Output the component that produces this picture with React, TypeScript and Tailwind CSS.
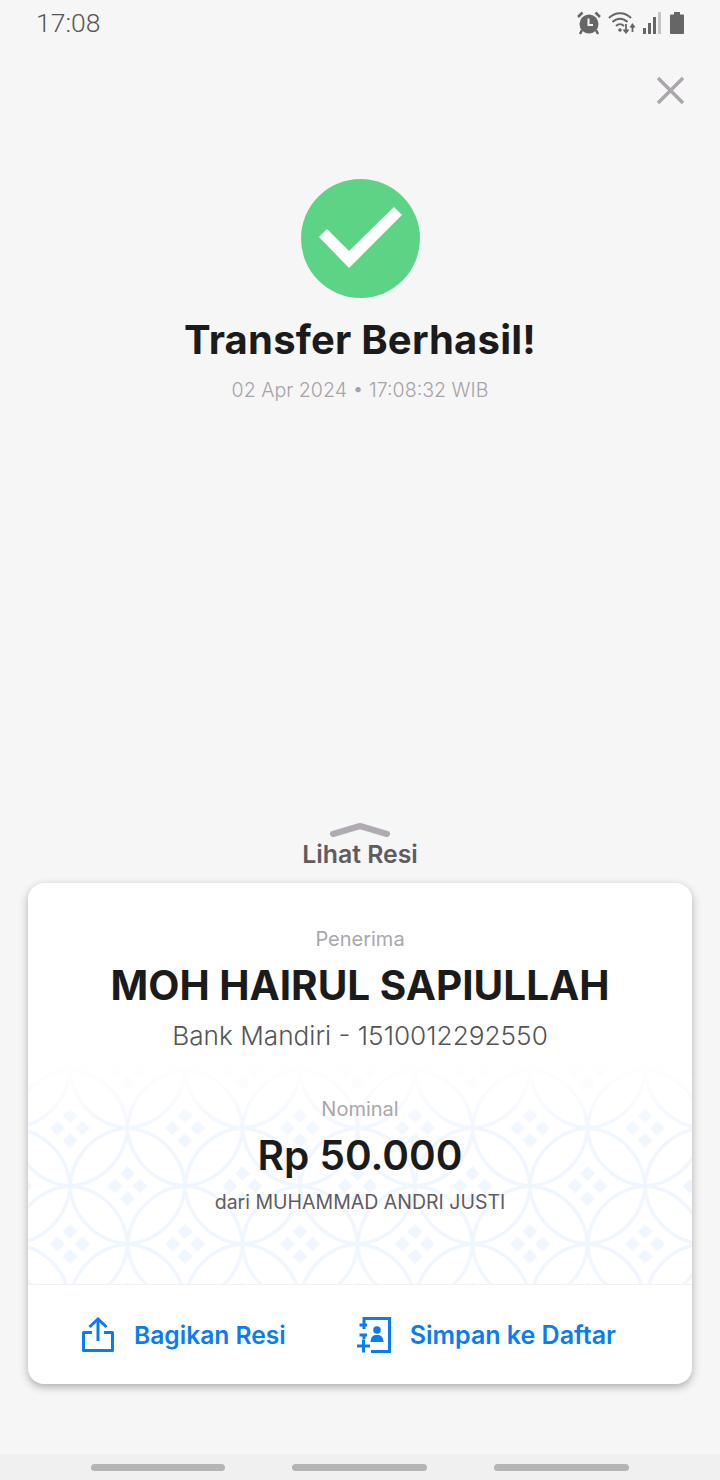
const font = "font-['Inter','Liberation_Sans',sans-serif]";

const AlarmIcon = () => (
  <svg width="24" height="24" viewBox="0 0 24 24" fill="#666">
    <circle cx="12" cy="13" r="9.5" />
    <path d="M5 19 L3 23 M19 19 L21 23" stroke="#666" strokeWidth="2.500" />
    <path d="M1 6 L5.5 1.5 M23 6 L18.5 1.5" stroke="#666" strokeWidth="2.500" />
    <path d="M11.5 7.500 V14 H16" fill="none" stroke="#f6f6f6" strokeWidth="2" />
  </svg>
);

const WifiIcon = () => (
  <svg width="28" height="24" viewBox="0 0 28 24" fill="none" stroke="#666">
    <path d="M1 7 C7 0.5 17 0.5 23 7" strokeWidth="2" />
    <path d="M4.5 11 C9 6.5 15 6.5 19.5 11" strokeWidth="2" />
    <path d="M8 15 C10.5 12.5 13.5 12.5 16 15" strokeWidth="2" />
    <circle cx="12" cy="19" r="1.8" fill="#666" stroke="none" />
    <path d="M18 13 V21 M15.5 18.5 L18 21.5 L20.5 18.5" strokeWidth="1.8" />
    <path d="M24.5 21 V14 M22.5 16.5 L24.5 13.5 L26.5 16.5" strokeWidth="1.8" />
  </svg>
);

const SignalIcon = () => (
  <svg width="18" height="22" viewBox="0 0 18 22">
    <rect x="0" y="16" width="3" height="6" fill="#666" />
    <rect x="5" y="11" width="3" height="11" fill="#666" />
    <rect x="10" y="5" width="3" height="17" fill="#666" />
    <rect x="15" y="0" width="3" height="22" fill="#c4c4c4" />
  </svg>
);

const BatteryIcon = () => (
  <svg width="14" height="22" viewBox="0 0 14 22" fill="#666">
    <rect x="4" y="0" width="6" height="3" />
    <rect x="0" y="2.5" width="14" height="19.5" rx="1" />
  </svg>
);

const ShareIcon = () => (
  <svg width="32" height="35" viewBox="0 0 32 35" fill="none" stroke="#0a7cf0" strokeWidth="3">
    <path d="M10 15.5 H1.5 V33.5 H30.5 V15.5 H22" strokeLinejoin="round" />
    <path d="M16 24 V2.5" />
    <path d="M7.5 10 L16 2 L24.5 10" />
  </svg>
);

const ContactIcon = () => (
  <svg width="34" height="36" viewBox="0 0 34 36" fill="none" stroke="#0a7cf0" strokeWidth="3">
    <path d="M7 4 V1.5 H32.5 V34.5 H14" />
    <path d="M2.5 8 H10 M7 8 V4 M7 12 V8 M2.5 18 H10 M7 18 V22" />
    <path d="M0 29 H13 M6.5 22.5 V35.5" />
    <circle cx="20" cy="13" r="3.8" fill="#0a7cf0" stroke="none" />
    <path d="M13.500 25 C14 19.500 16 18 20 18 C24 18 26 19.500 26.500 25 Z" fill="#0a7cf0" stroke="none" />
  </svg>
);

const BatikPattern = () => (
  <svg className="absolute inset-0 h-full w-full" aria-hidden="true">
    <defs>
      <pattern
        id="kawung"
        width="115"
        height="116"
        patternUnits="userSpaceOnUse"
        patternTransform="translate(-15.5 10)"
      >
        <g fill="none" stroke="#f0f6fe" strokeWidth="3.5">
          <path d="M57.5 0 A62 62 0 0 0 0 58 A62 62 0 0 0 57.5 0" />
          <path d="M57.5 0 A62 62 0 0 0 115 58 A62 62 0 0 0 57.5 0" />
          <path d="M0 58 A62 62 0 0 0 57.5 116 A62 62 0 0 0 0 58" />
          <path d="M115 58 A62 62 0 0 0 57.5 116 A62 62 0 0 0 115 58" />
        </g>
        <g fill="#f0f6fe">
          <path d="M57.5 38 l7.5 7.500 l-7.5 7.500 l-7.5 -7.500 Z M57.5 63 l7.5 7.500 l-7.5 7.500 l-7.5 -7.500 Z M45 50.500 l7.5 7.500 l-7.5 7.500 l-7.5 -7.500 Z M70 50.500 l7.5 7.500 l-7.5 7.500 l-7.5 -7.500 Z" />
          <path d="M0 5 l7.5 7.500 l-7.5 7.500 l-7.5 -7.500 Z M12.500 -7.500 l7.5 7.500 l-7.5 7.500 l-7.5 -7.500 Z M115 5 l7.5 7.500 l-7.5 7.500 l-7.5 -7.500 Z M102.500 -7.500 l7.5 7.500 l-7.5 7.500 l-7.5 -7.500 Z" />
          <path d="M0 96 l7.5 7.500 l-7.5 7.500 l-7.5 -7.500 Z M12.500 108.500 l7.5 7.500 l-7.5 7.500 l-7.5 -7.500 Z M115 96 l7.5 7.500 l-7.5 7.500 l-7.5 -7.500 Z M102.500 108.500 l7.5 7.500 l-7.5 7.500 l-7.5 -7.500 Z" />
        </g>
      </pattern>
    </defs>
    <rect width="100%" height="100%" fill="url(#kawung)" />
  </svg>
);

export default function App() {
  return (
    <div className={`flex h-[1480px] w-[720px] flex-col overflow-hidden bg-[#f6f6f6] ${font}`}>
      <div className="flex h-[46px] items-center justify-between pl-[36px] pr-[36px]">
        <span className="font-['Roboto',sans-serif] text-[26.5px] font-light text-[#555]">17:08</span>
        <div className="flex items-center gap-[7px]">
          <AlarmIcon />
          <WifiIcon />
          <SignalIcon />
          <div className="ml-[2px]">
            <BatteryIcon />
          </div>
        </div>
      </div>

      <div className="flex justify-end pr-[36px] pt-[31px]">
        <svg width="27" height="27" viewBox="0 0 27 27" stroke="#aaa6ac" strokeWidth="3.500">
          <path d="M1 1 L26 26 M26 1 L1 26" />
        </svg>
      </div>

      <div className="mt-[75px] flex flex-col items-center">
        <div className="h-[119px] w-[119px] rounded-full bg-[#5dd385]">
          <svg width="119" height="119" viewBox="0 0 119 119" fill="#fff">
            <polygon points="18,58 26,50 48,72 93,28 101,36 48,89" />
          </svg>
        </div>
        <h1 className="mt-[17px] text-[40px] font-bold leading-[50px] tracking-[0.2px] text-[#1b1b1b]">
          Transfer Berhasil!
        </h1>
        <p className="mt-[12px] text-[19.6px] font-light leading-[26px] text-[#a8a2aa]">
          02 Apr 2024 • 17:08:32 WIB
        </p>
      </div>

      <div className="mt-[419px] flex flex-col items-center">
        <svg width="60" height="16" viewBox="0 0 60 16" fill="none" stroke="#b0aab2" strokeWidth="6" strokeLinecap="round">
          <path d="M3 12 L30 4 L57 12" />
        </svg>
        <span className="mt-[1px] text-[24.8px] font-semibold leading-[30px] text-[#5f5b5f]">Lihat Resi</span>
      </div>

      <div className="mx-[28px] mt-[14px] h-[501px] overflow-hidden rounded-[16px] bg-white shadow-[0_3px_8px_rgba(0,0,0,0.3)]">
        <div className="relative h-[402px] border-b border-[#f1f1f1]">
          <div className="absolute inset-x-0 top-[177px] bottom-0">
            <BatikPattern />
            <div className="absolute inset-x-0 top-0 h-[80px] bg-gradient-to-b from-white to-transparent" />
          </div>
          <div className="relative flex flex-col items-center pt-[43px]">
            <span className="text-[20px] leading-[26px] text-[#aaa6ac]">Penerima</span>
            <span className="mt-[10px] text-[40.5px] font-bold leading-[48px] text-[#1b1b1b]">
              MOH HAIRUL SAPIULLAH
            </span>
            <span className="mt-[8px] text-[26.2px] font-light leading-[36px] text-[#555]">
              Bank Mandiri - 1510012292550
            </span>
            <span className="mt-[42px] text-[20px] leading-[26px] text-[#aaa6ac]">Nominal</span>
            <span className="mt-[10px] text-[40.5px] font-semibold leading-[48px] text-[#1b1b1b]">
              Rp 50.000
            </span>
            <span className="mt-[9px] text-[19.5px] leading-[26px] text-[#5f5b5f]">
              dari MUHAMMAD ANDRI JUSTI
            </span>
          </div>
        </div>
        <div className="flex h-[99px] items-center pl-[54px]">
          <ShareIcon />
          <span className="ml-[20px] mt-[2px] text-[24.6px] font-semibold text-[#0a7cf0]">Bagikan Resi</span>
          <div className="ml-[71px]">
            <ContactIcon />
          </div>
          <span className="ml-[19px] mt-[2px] text-[25px] font-semibold text-[#0a7cf0]">Simpan ke Daftar</span>
        </div>
      </div>

      <div className="mt-auto flex h-[26px] items-center justify-between bg-[#f0f0f0] px-[91px]">
        <div className="h-[7px] w-[134px] rounded-full bg-[#b5b5b5]" />
        <div className="h-[7px] w-[135px] rounded-full bg-[#b5b5b5]" />
        <div className="h-[7px] w-[135px] rounded-full bg-[#b5b5b5]" />
      </div>
    </div>
  );
}
